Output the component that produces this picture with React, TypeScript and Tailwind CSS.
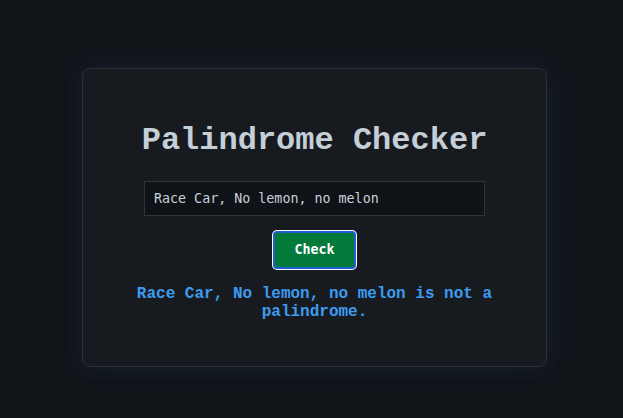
import { useState } from "react";

export default function App() {
  const [text, setText] = useState("Race Car, No lemon, no melon");
  const [result, setResult] = useState(
    "Race Car, No lemon, no melon is not a palindrome."
  );

  const check = () => {
    const clean = text.toLowerCase().replace(/[^a-z0-9]/g, "");
    const isPal = clean === clean.split("").reverse().join("");
    setResult(`${text} is ${isPal ? "" : "not "}a palindrome.`);
  };

  return (
    <div className="flex min-h-screen items-center justify-center bg-[#111419] pl-[6px] pt-[16px]">
      <div className="flex w-[465px] flex-col items-center rounded-lg border border-[#2b3138] bg-[#171b1f] px-8 pb-[45px] pt-[53px] shadow-[0_0_24px_rgba(40,70,120,0.25)]">
        <h1 className="mb-[21px] h-[38px] font-['Liberation_Mono',monospace] text-[32px] font-bold leading-[38px] text-[#c5cfd8]">
          Palindrome Checker
        </h1>
        <input
          type="text"
          value={text}
          onChange={(e) => setText(e.target.value)}
          className="h-[35px] w-[341px] border border-[#2e343b] bg-[#0f1216] pl-[9px] font-['DejaVu_Sans_Mono',monospace] text-[13.33px] text-[#c9d1d9] outline-none"
        />
        <button
          onClick={check}
          className="mt-[15px] rounded-[4px] border-2 border-[#1b5fd1] bg-[#037a3a] px-[19px] py-[9px] font-['DejaVu_Sans_Mono',monospace] text-[13.33px] font-bold leading-4 text-white ring-1 ring-white"
        >
          Check
        </button>
        <p className="mt-[16px] text-center font-['Liberation_Mono',monospace] text-base font-bold leading-[18px] text-[#3d9bf0]">
          {result}
        </p>
      </div>
    </div>
  );
}
